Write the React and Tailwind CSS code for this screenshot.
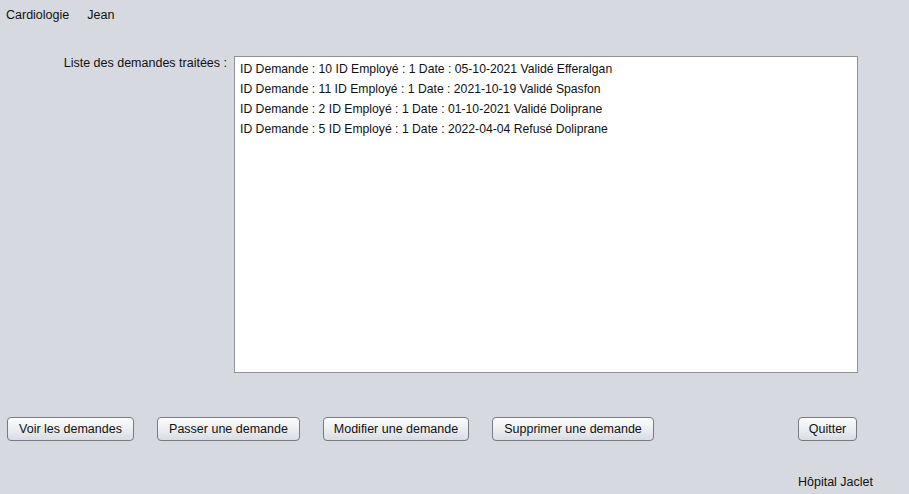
import React from "react";

const rows = [
  "ID Demande : 10 ID Employé : 1 Date : 05-10-2021 Validé Efferalgan",
  "ID Demande : 11 ID Employé : 1 Date : 2021-10-19 Validé Spasfon",
  "ID Demande : 2 ID Employé : 1 Date : 01-10-2021 Validé Doliprane",
  "ID Demande : 5 ID Employé : 1 Date : 2022-04-04 Refusé Doliprane",
];

function SwingButton({ children, className = "" }) {
  return (
    <button
      className={
        "h-[24px] rounded-[4px] border border-[#767b86] bg-gradient-to-b from-[#fbfcfd] via-[#eceef2] to-[#d9dce3] text-[12.5px] leading-none text-[#111] shadow-[inset_0_1px_0_#fff] whitespace-nowrap " +
        className
      }
    >
      {children}
    </button>
  );
}

export default function App() {
  return (
    <div
      className="w-[909px] h-[494px] bg-[#d6d9df] text-[12.5px] text-[#111] flex flex-col overflow-hidden"
      style={{ fontFamily: '"Liberation Sans", Arial, sans-serif' }}
    >
      <div className="flex pl-[6px] pt-[8px] h-[56px] leading-[14px]">
        <span>Cardiologie</span>
        <span className="ml-[18px]">Jean</span>
      </div>

      <div className="flex">
        <div className="w-[234px] pr-[7px] text-right leading-[14px] whitespace-nowrap">
          Liste des demandes traitées :
        </div>
        <div className="w-[624px] h-[317px] bg-white border border-[#8e929a] pt-[2px] pl-[5px] text-[12.2px]">
          {rows.map((r) => (
            <div key={r} className="h-[20px] leading-[20px] whitespace-nowrap">
              {r}
            </div>
          ))}
        </div>
      </div>

      <div className="flex items-center mt-[44px] pl-[7px]">
        <SwingButton className="w-[127px]">Voir les demandes</SwingButton>
        <SwingButton className="w-[143px] ml-[23px]">Passer une demande</SwingButton>
        <SwingButton className="w-[146px] ml-[23px]">Modifier une demande</SwingButton>
        <SwingButton className="w-[162px] ml-[23px]">Supprimer une demande</SwingButton>
        <SwingButton className="w-[59px] ml-[144px]">Quitter</SwingButton>
      </div>

      <div className="flex justify-end pr-[36px] mt-[34px] leading-[14px]">
        <span>Hôpital Jaclet</span>
      </div>
    </div>
  );
}
